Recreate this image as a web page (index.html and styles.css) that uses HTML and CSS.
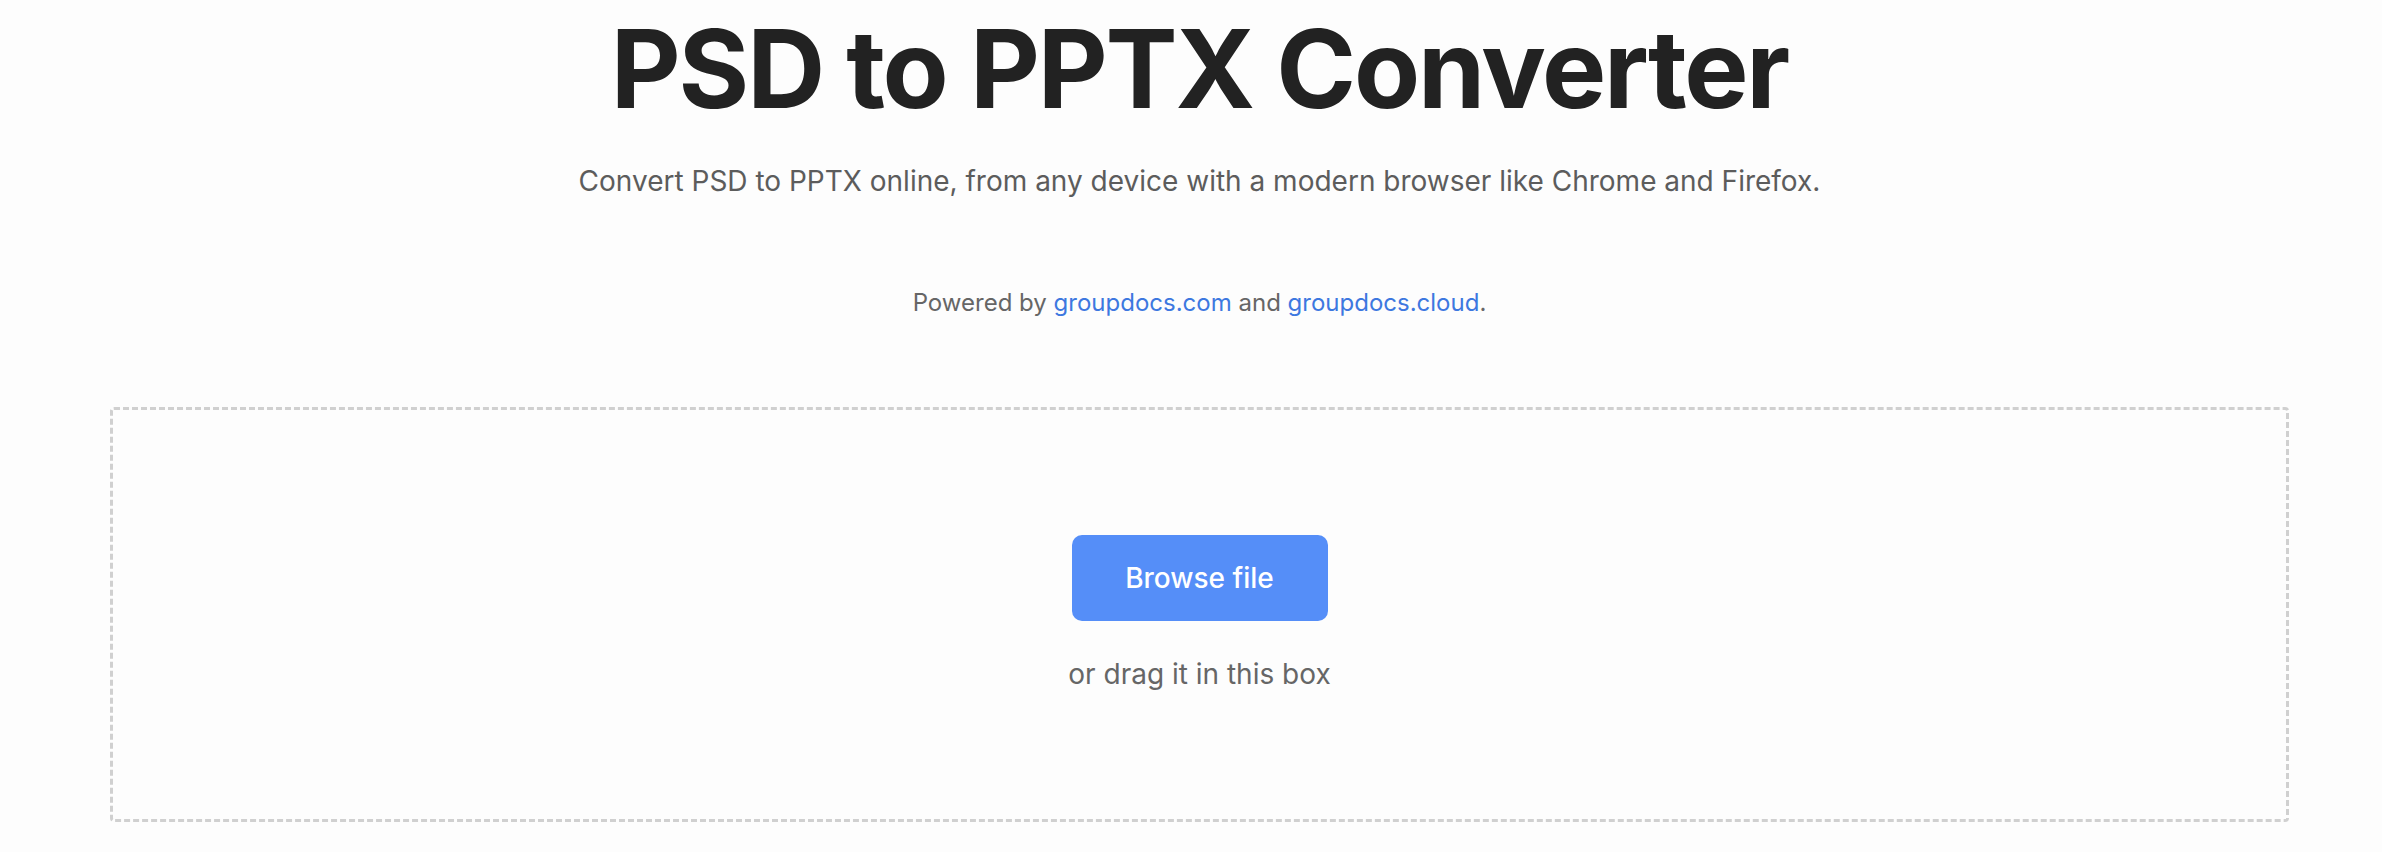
FILE: index.html
```html
<!DOCTYPE html>
<html lang="en">
<head>
    <meta charset="UTF-8">
    <meta name="viewport" content="width=device-width, initial-scale=1.0">
    <title>PSD to PPTX Converter</title>
    <link rel="stylesheet" href="styles.css">
</head>
<body>
    <div class="page">
        <h1 class="title">PSD to PPTX Converter</h1>
        <p class="subtitle">Convert PSD to PPTX online, from any device with a modern browser like Chrome and Firefox.</p>
        <p class="powered">Powered by <a href="#">groupdocs.com</a> and <a href="#">groupdocs.cloud</a>.</p>

        <div class="dropzone">
            <button class="browse">Browse file</button>
            <div class="drag-hint">or drag it in this box</div>
        </div>
    </div>
</body>
</html>
```

FILE: styles.css
```css
body {
    margin: 0;
    background-color: #fdfdfd;
    font-family: 'Inter', 'Noto Sans', sans-serif;
    color: #222;
}

.page {
    padding: 4px 93px 0 110px;
    text-align: center;
}

.title {
    margin: 0;
    font-size: 108px;
    font-weight: 700;
    line-height: 1.2;
    letter-spacing: -2.2px;
    color: #222;
}

.subtitle {
    margin: 26px 0 0;
    font-size: 28px;
    line-height: 1.5;
    color: #5c5c5c;
}

.powered {
    margin: 83px 0 0;
    font-size: 24px;
    line-height: 1.5;
    color: #666;
}

.powered a {
    color: #3d78e0;
    text-decoration: none;
}

.dropzone {
    margin-top: 86px;
    height: 415px;
    box-sizing: border-box;
    padding-top: 125px;
    border: 3px dashed #d0d0d0;
    border-radius: 4px;
    display: flex;
    flex-direction: column;
    align-items: center;
}

.browse {
    width: 256px;
    height: 86px;
    border: none;
    border-radius: 10px;
    background-color: #558ef8;
    color: #fff;
    font-family: inherit;
    font-size: 28px;
    font-weight: 500;
    cursor: pointer;
}

.drag-hint {
    margin-top: 36px;
    font-size: 28px;
    color: #666;
}
```
